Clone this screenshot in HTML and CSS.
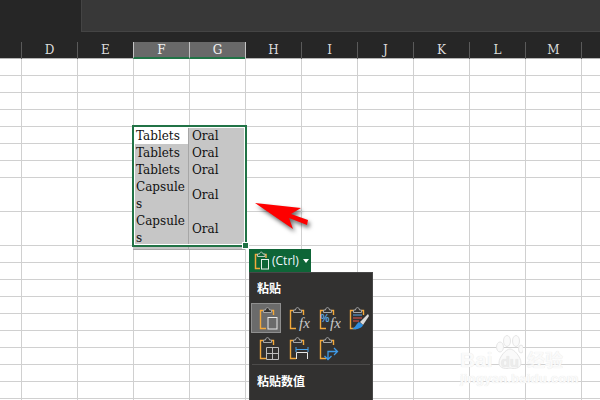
FILE: index.html
```html
<!DOCTYPE html>
<html lang="en">
<head>
    <meta charset="UTF-8">
    <title>Paste options</title>
    <link rel="stylesheet" href="styles.css">
</head>
<body>
    <svg class="defs" width="0" height="0">
        <symbol id="board" viewBox="0 0 30 30">
            <path d="M12.5 7.5H9.5V25.5H15" fill="none" stroke="#f2a93b" stroke-width="1.4"/>
            <path d="M20.5 7.5H22.5V12" fill="none" stroke="#f2a93b" stroke-width="1.4"/>
            <path d="M12.5 9.5V7H14.5C14.8 3.8 18.2 3.8 18.5 7H20.5V9.5Z" fill="#323130" stroke="#a8a8a8"/>
        </symbol>
    </svg>

    <div class="app">
        <div class="titlebar">
            <div class="ribbon"></div>
        </div>

        <div class="col-headers">
            <div class="col-head corner"></div>
            <div class="col-head">D</div>
            <div class="col-head">E</div>
            <div class="col-head selected">F</div>
            <div class="col-head selected">G</div>
            <div class="col-head after-selected">H</div>
            <div class="col-head">I</div>
            <div class="col-head">J</div>
            <div class="col-head">K</div>
            <div class="col-head">L</div>
            <div class="col-head">M</div>
            <div class="col-head"></div>
        </div>

        <div class="sheet">
            <div class="row"></div>
            <div class="row"></div>
            <div class="row"></div>
            <div class="row"></div>
            <div class="row data">
                <div class="cell active">Tablets</div>
                <div class="cell">Oral</div>
            </div>
            <div class="row data">
                <div class="cell">Tablets</div>
                <div class="cell">Oral</div>
            </div>
            <div class="row data">
                <div class="cell">Tablets</div>
                <div class="cell">Oral</div>
            </div>
            <div class="row data tall">
                <div class="cell">Capsule<br>s</div>
                <div class="cell">Oral</div>
            </div>
            <div class="row data tall">
                <div class="cell">Capsule<br>s</div>
                <div class="cell">Oral</div>
            </div>
            <div class="row"></div>
            <div class="row"></div>
            <div class="row"></div>
            <div class="row"></div>
            <div class="row"></div>
            <div class="row"></div>
            <div class="row"></div>
            <div class="row"></div>
            <div class="row"></div>
            <div class="row"></div>
        </div>

        <div class="selection">
            <div class="handle"></div>
        </div>

        <svg class="arrow" width="70" height="45" viewBox="250 195 70 45">
            <polygon points="255,203 301,208 291,214 308,220 307,225 289,218 293,229" fill="#fe0000"/>
        </svg>

        <div class="watermark">
            <svg class="paw" width="28" height="36" viewBox="0 0 28 36">
                <ellipse cx="5" cy="12" rx="3.5" ry="5"/>
                <ellipse cx="12" cy="6" rx="3.5" ry="5.5"/>
                <ellipse cx="21" cy="6" rx="3.5" ry="5.5"/>
                <ellipse cx="26" cy="14" rx="2.5" ry="4"/>
                <path d="M4 28C4 22 11 14 15 14C19 14 26 22 26 28C26 34 18 34 15 33C12 34 4 34 4 28Z"/>
            </svg>
            <div class="wm-brand"><span>Bai</span><span class="wm-du">du</span><span class="wm-cn">经验</span></div>
            <div class="wm-url">jingyan.baidu.com</div>
        </div>

        <div class="paste-tag">
            <svg class="tag-icon" width="20" height="20" viewBox="0 0 20 20">
                <path d="M5.5 3.5H3.5V17.5H8" fill="none" stroke="#f2a93b" stroke-width="1.5"/>
                <path d="M13 3.5H14V7" fill="none" stroke="#f2a93b" stroke-width="1.5"/>
                <path d="M5.5 5.5V3H7.5C8 0.5 10.5 0.5 11 3H13V5.5Z" fill="#0e6537" stroke="#b9c9bd"/>
                <rect x="9.5" y="8.5" width="7" height="9.5" fill="#0e6537" stroke="#e6efe9"/>
            </svg>
            <span>(Ctrl)</span>
            <span class="caret"></span>
        </div>

        <div class="paste-menu">
            <div class="menu-title">粘贴</div>
            <div class="icon-grid">
                <div class="paste-btn current">
                    <svg width="30" height="30" viewBox="0 0 30 30">
                        <use href="#board"/>
                        <rect x="17" y="14.5" width="9" height="11.5" fill="#6b6b6b" stroke="#e8e8e8"/>
                    </svg>
                </div>
                <div class="paste-btn">
                    <svg width="30" height="30" viewBox="0 0 30 30">
                        <use href="#board"/>
                        <text class="fx" x="18" y="25">fx</text>
                    </svg>
                </div>
                <div class="paste-btn">
                    <svg width="30" height="30" viewBox="0 0 30 30">
                        <use href="#board"/>
                        <text class="pct" x="9.5" y="19">%</text>
                        <text class="fx" x="19" y="25">fx</text>
                    </svg>
                </div>
                <div class="paste-btn">
                    <svg width="30" height="30" viewBox="0 0 30 30">
                        <use href="#board"/>
                        <path d="M12 12H21" stroke="#5aa7e6"/>
                        <path d="M12 15H21" stroke="#e8574d"/>
                        <path d="M12 18H18" stroke="#e8574d"/>
                        <path d="M27 11L19 19L22 22L28 13Z" fill="#d9d9d9"/>
                        <path d="M18 19C15 21 15 24 11 26C16 27 21 25 22 22Z" fill="#2f8fe0"/>
                    </svg>
                </div>
                <div class="paste-btn">
                    <svg width="30" height="30" viewBox="0 0 30 30">
                        <use href="#board"/>
                        <path d="M15.5 14.5H27.5V26.5H15.5ZM21.5 14.5V26.5M15.5 20.5H27.5" fill="#323130" stroke="#bdbdbd"/>
                    </svg>
                </div>
                <div class="paste-btn">
                    <svg width="30" height="30" viewBox="0 0 30 30">
                        <use href="#board"/>
                        <path d="M15 16.5H27M15 14V19M27 14V19" fill="none" stroke="#4aa3e8"/>
                        <path d="M15.5 26V19.5H26.5V26" fill="none" stroke="#e8e8e8"/>
                    </svg>
                </div>
                <div class="paste-btn">
                    <svg width="30" height="30" viewBox="0 0 30 30">
                        <use href="#board"/>
                        <path d="M17 26.5V18.5H26M23 15L26.5 18.5L23 22M13.5 23L17 26.5L20.5 23" fill="none" stroke="#3f9ae6" stroke-width="1.3"/>
                    </svg>
                </div>
            </div>
            <div class="menu-sep"></div>
            <div class="menu-title values">粘贴数值</div>
        </div>
    </div>
</body>
</html>
```

FILE: styles.css
```css
* {
    margin: 0;
    padding: 0;
    box-sizing: border-box;
}

body {
    width: 600px;
    height: 400px;
    overflow: hidden;
    background: #fff;
}

.defs {
    display: none;
}

.app {
    position: relative;
    width: 600px;
    height: 400px;
    overflow: hidden;
}

.titlebar {
    height: 42px;
    background: #262626;
    padding-left: 81px;
}

.ribbon {
    height: 32px;
    background: #383838;
    border-left: 1px solid #444;
    border-bottom: 1px solid #444;
}

.col-headers {
    display: grid;
    grid-template-columns: 21px repeat(10, 56px) 1fr;
    height: 17px;
    background: #262626;
    border-bottom: 1px solid #b5b5b5;
}

.col-head {
    border-left: 1px solid #5a5a5a;
    color: #dcdcdc;
    font-family: "DejaVu Serif", serif;
    font-size: 12px;
    line-height: 17px;
    text-align: center;
}

.col-head.corner {
    border-left: none;
}

.col-head.selected {
    height: 17px;
    background: #696969;
    border-left-color: #c4c4c4;
    border-bottom: 2px solid #217346;
    color: #f2f2f2;
}

.col-head.after-selected {
    border-left-color: #c4c4c4;
}

.sheet {
    background: linear-gradient(90deg, #d0d0d0 1px, transparent 1px) 21px 0 / 56px 100%;
}

.row {
    height: 17px;
    border-bottom: 1px solid #d0d0d0;
}

.row.data {
    display: grid;
    grid-template-columns: 56px 56px;
    padding-left: 133px;
}

.row.tall {
    height: 34px;
}

.cell {
    display: flex;
    align-items: center;
    height: calc(100% + 1px);
    padding: 0 0 2px 3px;
    background: #c6c6c6;
    border-right: 1px solid #a6a6a6;
    border-bottom: 1px solid #a6a6a6;
    color: #111;
    font-family: "DejaVu Serif", serif;
    font-size: 12px;
    line-height: 17px;
    white-space: nowrap;
}

.cell.active {
    background: #fff;
}

.selection {
    position: absolute;
    left: 132px;
    top: 125px;
    width: 115px;
    height: 122px;
    border: 2px solid #217346;
    outline: 1px solid #fff;
    outline-offset: -3px;
}

.handle {
    position: absolute;
    right: -4px;
    bottom: -4px;
    width: 7px;
    height: 7px;
    background: #217346;
    border: 1px solid #fff;
}

.arrow {
    position: absolute;
    left: 250px;
    top: 195px;
    filter: drop-shadow(2px 3px 2px rgba(0, 0, 0, 0.6));
}

.watermark {
    position: absolute;
    left: 460px;
    top: 335px;
    width: 110px;
    height: 52px;
    color: #fafafa;
    font-family: "Liberation Sans", sans-serif;
    text-shadow: 0 0 1px #e0e0e0;
}

.paw {
    position: absolute;
    left: 35px;
    top: 0;
    fill: #fafafa;
    stroke: #e6e6e6;
}

.wm-brand {
    position: relative;
    display: flex;
    align-items: baseline;
    height: 34px;
    padding-top: 13px;
    font-size: 21px;
    font-weight: 700;
    line-height: 22px;
}

.wm-du {
    margin-left: 8px;
    font-size: 15px;
    color: #ececec;
}

.wm-cn {
    margin-left: 8px;
    font-family: "Noto Sans CJK SC", sans-serif;
    font-size: 18px;
}

.wm-url {
    margin-top: 3px;
    font-size: 13.5px;
    font-weight: 700;
    line-height: 14px;
    white-space: nowrap;
}

.paste-tag {
    position: absolute;
    left: 249px;
    top: 249px;
    display: flex;
    align-items: center;
    width: 62px;
    height: 23px;
    padding-left: 3px;
    background: #0e6537;
    color: #f2f6ff;
    font-family: "Open Sans", sans-serif;
    font-size: 12px;
}

.tag-icon {
    margin-right: 0;
}

.caret {
    margin-left: 4px;
    border-left: 3.5px solid transparent;
    border-right: 3.5px solid transparent;
    border-top: 4px solid #fff;
}

.paste-menu {
    position: absolute;
    left: 249px;
    top: 272px;
    width: 124px;
    height: 128px;
    background: #323130;
    border: 1px solid #484848;
    border-bottom: none;
    color: #fff;
    font-family: "Noto Sans CJK SC", sans-serif;
}

.menu-title {
    height: 30px;
    padding-left: 7px;
    font-size: 12px;
    font-weight: 700;
    line-height: 30px;
}

.icon-grid {
    display: grid;
    grid-template-columns: repeat(4, 30px);
    grid-auto-rows: 30px;
    padding-left: 1px;
}

.paste-btn.current {
    background: #6b6b6b;
    box-shadow: inset 0 0 0 1px #8f8f8f;
}

.paste-btn svg {
    display: block;
}

.fx {
    fill: #c8c8c8;
    font-family: "Liberation Serif", serif;
    font-size: 15px;
    font-style: italic;
}

.pct {
    fill: #5aa7e6;
    font-family: "Liberation Sans", sans-serif;
    font-size: 10px;
    font-weight: 700;
}

.menu-sep {
    height: 1px;
    margin: 1px 2px 0;
    background: #4c4b4a;
}

.menu-title.values {
    height: 31px;
    line-height: 31px;
}
```
